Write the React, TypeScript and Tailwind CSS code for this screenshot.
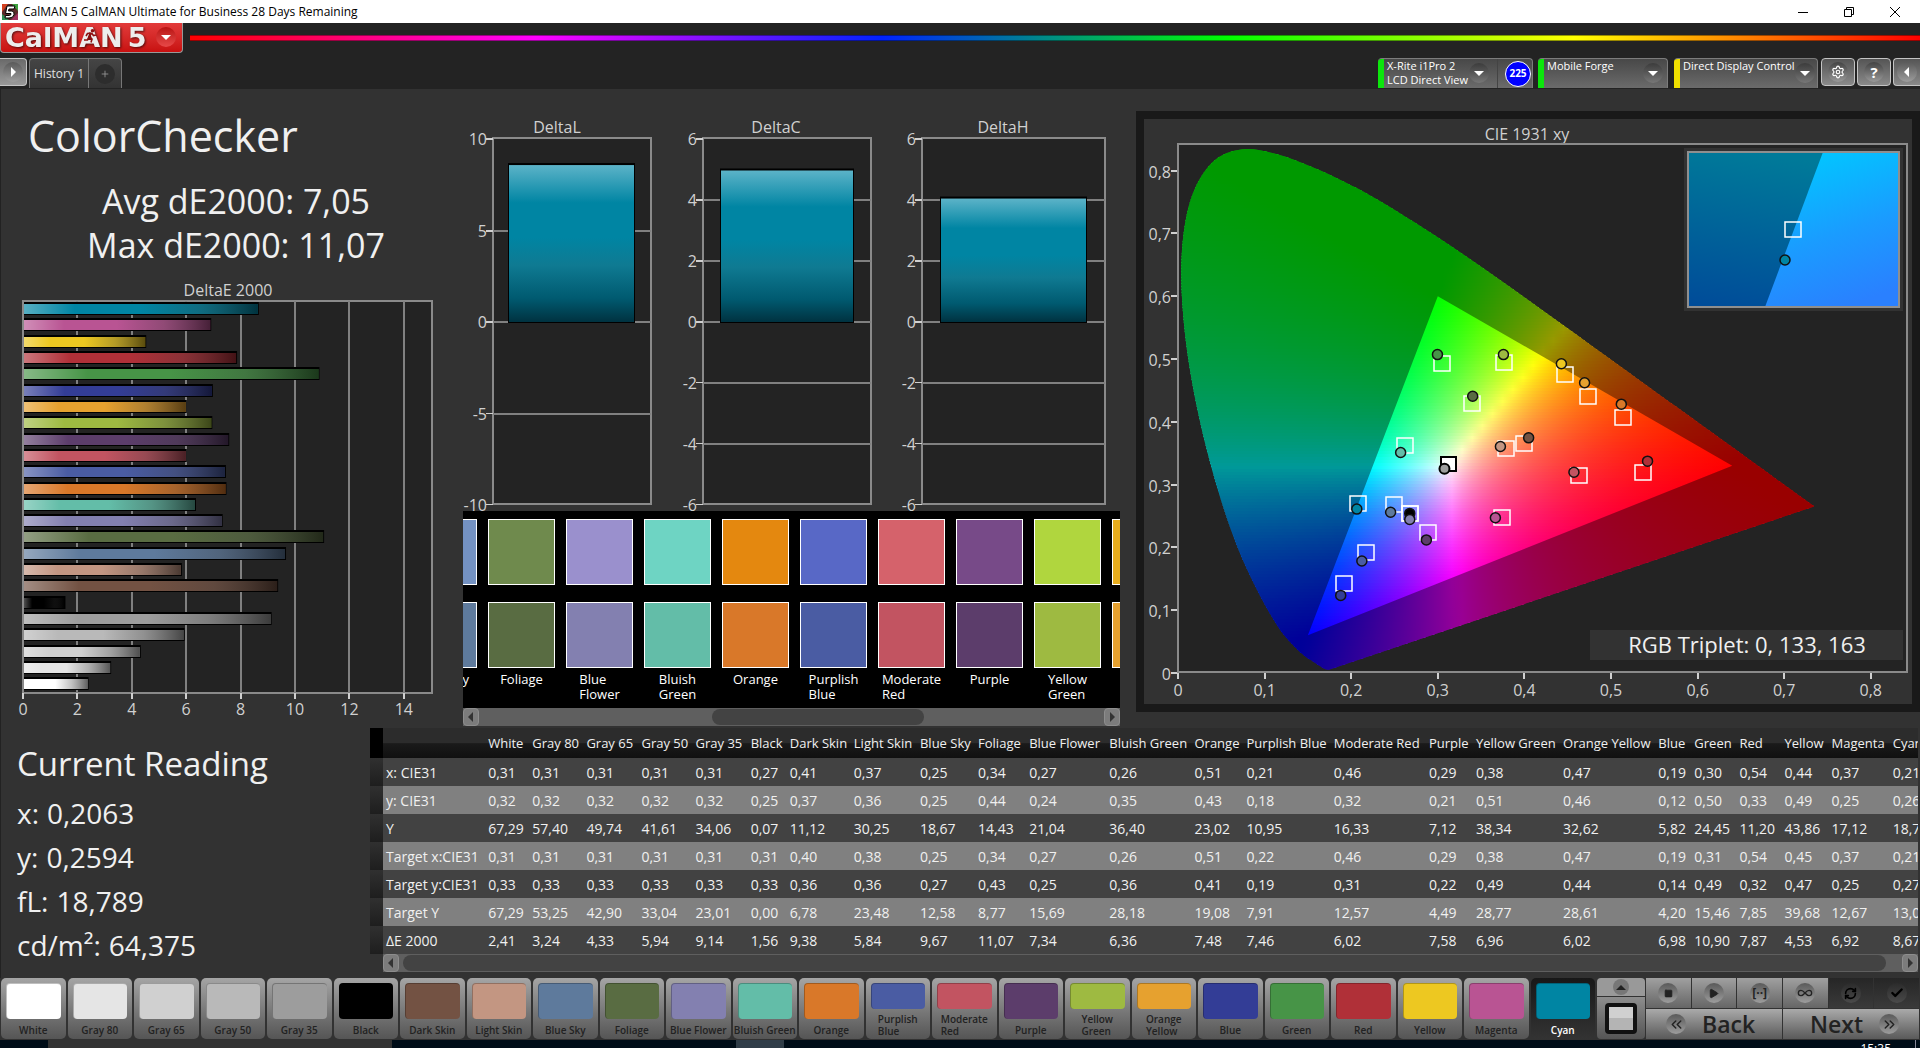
import type { ReactNode } from "react";
import {
  Settings,
  Square,
  Play,
  RefreshCw,
  Check,
  Infinity as InfinityIcon,
  ChevronsLeft,
  ChevronsRight,
  Plus,
} from "lucide-react";

type Patch = {
  name: string;
  color: string;
  values: string[];
  de: number;
  width: string;
};

const patches: Patch[] = [
  { name: "White", color: "#ffffff", values: ["0,31", "0,32", "67,29", "0,31", "0,33", "67,29", "2,41"], de: 2.41, width: "w-[44px]" },
  { name: "Gray 80", color: "#e5e5e5", values: ["0,31", "0,32", "57,40", "0,31", "0,33", "53,25", "3,24"], de: 3.24, width: "w-[54px]" },
  { name: "Gray 65", color: "#d0d0d0", values: ["0,31", "0,32", "49,74", "0,31", "0,33", "42,90", "4,33"], de: 4.33, width: "w-[55px]" },
  { name: "Gray 50", color: "#b9b9b9", values: ["0,31", "0,32", "41,61", "0,31", "0,33", "33,04", "5,94"], de: 5.94, width: "w-[54px]" },
  { name: "Gray 35", color: "#9d9d9d", values: ["0,31", "0,32", "34,06", "0,31", "0,33", "23,01", "9,14"], de: 9.14, width: "w-[55px]" },
  { name: "Black", color: "#000000", values: ["0,27", "0,25", "0,07", "0,31", "0,33", "0,00", "1,56"], de: 1.56, width: "w-[39px]" },
  { name: "Dark Skin", color: "#735243", values: ["0,41", "0,37", "11,12", "0,40", "0,36", "6,78", "9,38"], de: 9.38, width: "w-[64px]" },
  { name: "Light Skin", color: "#c39682", values: ["0,37", "0,36", "30,25", "0,38", "0,36", "23,48", "5,84"], de: 5.84, width: "w-[66px]" },
  { name: "Blue Sky", color: "#5e7a9c", values: ["0,25", "0,25", "18,67", "0,25", "0,27", "12,58", "9,67"], de: 9.67, width: "w-[58px]" },
  { name: "Foliage", color: "#596c42", values: ["0,34", "0,44", "14,43", "0,34", "0,43", "8,77", "11,07"], de: 11.07, width: "w-[51px]" },
  { name: "Blue Flower", color: "#8380b0", values: ["0,27", "0,24", "21,04", "0,27", "0,25", "15,69", "7,34"], de: 7.34, width: "w-[80px]" },
  { name: "Bluish Green", color: "#63bda8", values: ["0,26", "0,35", "36,40", "0,26", "0,36", "28,18", "6,36"], de: 6.36, width: "w-[85px]" },
  { name: "Orange", color: "#d97829", values: ["0,51", "0,43", "23,02", "0,51", "0,41", "19,08", "7,48"], de: 7.48, width: "w-[52px]" },
  { name: "Purplish Blue", color: "#4a5ca3", values: ["0,21", "0,18", "10,95", "0,22", "0,19", "7,91", "7,46"], de: 7.46, width: "w-[87px]" },
  { name: "Moderate Red", color: "#c25461", values: ["0,46", "0,32", "16,33", "0,46", "0,31", "12,57", "6,02"], de: 6.02, width: "w-[95px]" },
  { name: "Purple", color: "#5c3d6b", values: ["0,29", "0,21", "7,12", "0,29", "0,22", "4,49", "7,58"], de: 7.58, width: "w-[47px]" },
  { name: "Yellow Green", color: "#9eba41", values: ["0,38", "0,51", "38,34", "0,38", "0,49", "28,77", "6,96"], de: 6.96, width: "w-[87px]" },
  { name: "Orange Yellow", color: "#e6a12f", values: ["0,47", "0,46", "32,62", "0,47", "0,44", "28,61", "6,02"], de: 6.02, width: "w-[95px]" },
  { name: "Blue", color: "#333d96", values: ["0,19", "0,12", "5,82", "0,19", "0,14", "4,20", "6,98"], de: 6.98, width: "w-[36px]" },
  { name: "Green", color: "#479447", values: ["0,30", "0,50", "24,45", "0,31", "0,49", "15,46", "10,90"], de: 10.9, width: "w-[45px]" },
  { name: "Red", color: "#b03038", values: ["0,54", "0,33", "11,20", "0,54", "0,32", "7,85", "7,87"], de: 7.87, width: "w-[45px]" },
  { name: "Yellow", color: "#edc821", values: ["0,44", "0,49", "43,86", "0,45", "0,47", "39,68", "4,53"], de: 4.53, width: "w-[47px]" },
  { name: "Magenta", color: "#b95493", values: ["0,37", "0,25", "17,12", "0,37", "0,25", "12,67", "6,92"], de: 6.92, width: "w-[61px]" },
  { name: "Cyan", color: "#0085a3", values: ["0,21", "0,26", "18,75", "0,21", "0,27", "13,04", "8,67"], de: 8.67, width: "w-[40px]" },
];

const twoLine = ["Blue Flower", "Bluish Green", "Purplish Blue", "Moderate Red", "Yellow Green", "Orange Yellow"];

const rowNames = ["x: CIE31", "y: CIE31", "Y", "Target x:CIE31", "Target y:CIE31", "Target Y", "ΔE 2000"];

function DeltaEChart() {
  const unit = 27.2;
  const bars = [...patches].reverse();
  return (
    <svg viewBox="1 0 462 446" className="mt-[10px] block w-full" role="img" aria-label="DeltaE 2000 by patch">
      <defs>
        <linearGradient id="shadeX" x1="0" x2="1" y1="0" y2="0">
          <stop offset="0" stopColor="#fff" stopOpacity="0.35" />
          <stop offset="0.22" stopColor="#fff" stopOpacity="0" />
          <stop offset="0.5" stopColor="#333" stopOpacity="0" />
          <stop offset="0.75" stopColor="#333" stopOpacity="0.3" />
          <stop offset="1" stopColor="#000" stopOpacity="0.62" />
        </linearGradient>
      </defs>
      <text x="228" y="19" textAnchor="middle" className="fill-[#d0d0d0] text-[16px]">DeltaE 2000</text>
      <rect x="23" y="24" width="409" height="392" fill="#232323" stroke="#8a8a8a" strokeWidth="2" />
      {[0, 2, 4, 6, 8, 10, 12, 14].map((v) => (
        <g key={v}>
          {v > 0 && <rect x={Math.round(22 + v * unit)} y="24" width="2" height="392" fill="#808080" />}
          <rect x={Math.round(22 + v * unit)} y="416" width="2" height="6" fill="#d0d0d0" />
          <text x={23 + v * unit} y="438" textAnchor="middle" className="fill-[#d0d0d0] text-[16px]">{v}</text>
        </g>
      ))}
      {bars.map((p, i) => (
        <g key={p.name}>
          <rect x="23" y={Math.round(25 + i * 16.32)} width={p.de * unit} height="13" fill="#000" />
          <rect x="23" y={Math.round(25 + i * 16.32) + 2} width={p.de * unit - 1} height="10" fill={p.color} />
          <rect x="23" y={Math.round(25 + i * 16.32) + 2} width={p.de * unit - 1} height="10" fill="url(#shadeX)" />
        </g>
      ))}
      <rect x="22" y="24" width="2" height="392" fill="#8a8a8a" />
    </svg>
  );
}

type DeltaSpec = {
  title: string;
  titleX: number;
  left: number;
  right: number;
  barLeft: number;
  barRight: number;
  value: number;
  max: number;
  step: number;
};

const deltas: DeltaSpec[] = [
  { title: "DeltaL", titleX: 94, left: 30, right: 189, barLeft: 45, barRight: 172, value: 8.63, max: 10, step: 5 },
  { title: "DeltaC", titleX: 313, left: 240, right: 409, barLeft: 257, barRight: 391, value: 5.0, max: 6, step: 2 },
  { title: "DeltaH", titleX: 540, left: 459, right: 643, barLeft: 477, barRight: 624, value: 4.08, max: 6, step: 2 },
];

function DeltaCharts() {
  return (
    <svg viewBox="0 0 657 422" className="block w-full overflow-visible" role="img" aria-label="DeltaL, DeltaC and DeltaH">
      <defs>
        <linearGradient id="cyanBar" x1="0" x2="0" y1="0" y2="1">
          <stop offset="0" stopColor="#5cb3c8" />
          <stop offset="0.24" stopColor="#0085a3" />
          <stop offset="0.46" stopColor="#0085a3" />
          <stop offset="0.64" stopColor="#0f7a92" />
          <stop offset="0.85" stopColor="#005a70" />
          <stop offset="1" stopColor="#003240" />
        </linearGradient>
      </defs>
      {deltas.map((d) => {
        const mid = 233;
        const half = 183;
        const ticks: number[] = [];
        for (let v = d.max; v >= -d.max; v -= d.step) ticks.push(v);
        const top = mid - (d.value / d.max) * half;
        return (
          <g key={d.title}>
            <text x={d.titleX} y="44" textAnchor="middle" className="fill-[#d0d0d0] text-[16px]">{d.title}</text>
            <rect x={d.left} y="49" width={d.right - d.left - 1} height="366" fill="#232323" stroke="#8a8a8a" strokeWidth="2" />
            {ticks.map((v) => {
              const y = Math.round(mid - (v / d.max) * half);
              return (
                <g key={v}>
                  {Math.abs(v) < d.max && <rect x={d.left} y={y - 1} width={d.right - d.left - 1} height="2" fill="#808080" />}
                  <rect x={d.left - 7} y={y - 1} width="7" height={v >= 0 ? 2 : 1} fill="#d0d0d0" />
                  <text x={d.left - 6} y={y + 6} textAnchor="end" className="fill-[#d0d0d0] text-[16px]">{v}</text>
                </g>
              );
            })}
            <rect x={d.barLeft} y={top - 1} width={d.barRight - d.barLeft} height={mid - top + 2} fill="#000" />
            <rect x={d.barLeft + 1} y={top + 1} width={d.barRight - d.barLeft - 2} height={mid - top - 1} fill="url(#cyanBar)" />
          </g>
        );
      })}
    </svg>
  );
}

const locus: [number, number][] = [
  [0.1741, 0.005], [0.1689, 0.0069], [0.1644, 0.0109], [0.1566, 0.0177], [0.144, 0.0297], [0.1241, 0.0578],
  [0.1096, 0.0868], [0.0913, 0.1327], [0.0687, 0.2007], [0.0454, 0.295], [0.0235, 0.4127], [0.0082, 0.5384],
  [0.0039, 0.6548], [0.0139, 0.7502], [0.0389, 0.812], [0.0743, 0.8338], [0.1142, 0.8262], [0.1547, 0.8059],
  [0.1929, 0.7816], [0.2296, 0.7543], [0.3016, 0.6923], [0.3731, 0.6245], [0.4441, 0.5547], [0.5125, 0.4866],
  [0.5752, 0.4242], [0.627, 0.3725], [0.6658, 0.334], [0.6915, 0.3083], [0.719, 0.2809], [0.7347, 0.2653],
];

const px = (x: number) => 42 + x * 866;
const py = (y: number) => 562 - y * 628;

function locusPath() {
  const pts = locus.map(([x, y]) => [px(x), py(y)]);
  let d = `M${pts[0][0]},${pts[0][1]}`;
  for (let i = 0; i < pts.length - 1; i++) {
    const a = pts[Math.max(0, i - 1)];
    const b = pts[i];
    const c = pts[i + 1];
    const e = pts[Math.min(pts.length - 1, i + 2)];
    d += `C${b[0] + (c[0] - a[0]) / 6},${b[1] + (c[1] - a[1]) / 6} ${c[0] - (e[0] - b[0]) / 6},${c[1] - (e[1] - b[1]) / 6} ${c[0]},${c[1]}`;
  }
  return d + "Z";
}

const triangle = `M${px(0.64)},${py(0.33)}L${px(0.3)},${py(0.6)}L${px(0.15)},${py(0.06)}Z`;

function chromaColor(x: number, y: number) {
  const z = 1 - x - y;
  const lin = [
    3.2406 * x - 1.5372 * y - 0.4986 * z,
    -0.9689 * x + 1.8758 * y + 0.0415 * z,
    0.0557 * x - 0.204 * y + 1.057 * z,
  ].map((c) => Math.max(0, c));
  const peak = Math.max(...lin);
  const [r, g, b] = lin.map((c) => Math.round((255 * c) / peak));
  return `rgb(${r},${g},${b})`;
}

const STRIP = 3;
const strips = Array.from({ length: 178 }, (_, i) => {
  const top = 34 + i * STRIP;
  const y = (562 - (top + STRIP / 2)) / 628;
  return { top, stops: Array.from({ length: 65 }, (_, k) => chromaColor((k / 64) * 0.75, y)) };
});

type Marker = { tx: number; ty: number; mx: number; my: number; color: string };
const markers: Marker[] = [
  { tx: 0.305, ty: 0.493, mx: 0.2996, my: 0.507, color: "#479447" },
  { tx: 0.376, ty: 0.495, mx: 0.3758, my: 0.507, color: "#9eba41" },
  { tx: 0.447, ty: 0.476, mx: 0.4427, my: 0.4924, color: "#edc821" },
  { tx: 0.4735, ty: 0.4407, mx: 0.4695, my: 0.4622, color: "#e6a12f" },
  { tx: 0.5137, ty: 0.4073, mx: 0.5119, my: 0.4281, color: "#d97829" },
  { tx: 0.34, ty: 0.4294, mx: 0.3403, my: 0.4407, color: "#596c42" },
  { tx: 0.2624, ty: 0.3625, mx: 0.2571, my: 0.3512, color: "#63bda8" },
  { tx: 0.3793, ty: 0.3575, mx: 0.3723, my: 0.3607, color: "#c39682" },
  { tx: 0.3997, ty: 0.3657, mx: 0.4049, my: 0.3745, color: "#735243" },
  { tx: 0.4625, ty: 0.3153, mx: 0.4572, my: 0.3197, color: "#c25461" },
  { tx: 0.537, ty: 0.3197, mx: 0.5422, my: 0.3373, color: "#b03038" },
  { tx: 0.2083, ty: 0.2711, mx: 0.2065, my: 0.261, color: "#0085a3" },
  { tx: 0.2496, ty: 0.2686, mx: 0.2455, my: 0.256, color: "#5e7a9c" },
  { tx: 0.2676, ty: 0.2541, mx: 0.2676, my: 0.2541, color: "#000000" },
  { tx: 0.2676, ty: 0.2541, mx: 0.2676, my: 0.2446, color: "#8380b0" },
  { tx: 0.3741, ty: 0.2491, mx: 0.3665, my: 0.2472, color: "#b95493" },
  { tx: 0.2891, ty: 0.2238, mx: 0.2868, my: 0.2119, color: "#5c3d6b" },
  { tx: 0.217, ty: 0.1929, mx: 0.2123, my: 0.1784, color: "#4a5ca3" },
  { tx: 0.1914, ty: 0.1431, mx: 0.1879, my: 0.1236, color: "#333d96" },
];

const decimal = (v: number) => (v === 0 ? "0" : `0,${v}`);

function CieChart() {
  const shape = locusPath();
  return (
    <svg viewBox="0 0 768 585" className="block w-full border-8 border-[#191919] bg-[#323232]" role="img" aria-label="CIE 1931 xy chromaticity diagram">
      <defs>
        <clipPath id="locus"><path d={shape} /></clipPath>
        {strips.map((s) => (
          <linearGradient key={s.top} id={`strip${s.top}`} gradientUnits="userSpaceOnUse" x1={px(0)} x2={px(0.75)} y1="0" y2="0">
            {s.stops.map((c, k) => <stop key={k} offset={k / 64} stopColor={c} />)}
          </linearGradient>
        ))}
        <linearGradient id="insetDark" x1="0.3" x2="0.1" y1="0" y2="1">
          <stop offset="0" stopColor="#007a99" />
          <stop offset="1" stopColor="#004c99" />
        </linearGradient>
        <linearGradient id="insetLight" x1="0.3" x2="0.6" y1="0" y2="1">
          <stop offset="0" stopColor="#00c8ff" />
          <stop offset="0.55" stopColor="#1a9cff" />
          <stop offset="1" stopColor="#2a80ff" />
        </linearGradient>
      </defs>
      <g transform="translate(-8 -8)">
        <text x="391" y="29" textAnchor="middle" className="fill-[#d0d0d0] text-[16px]">CIE 1931 xy</text>
        <rect x="42" y="33" width="729" height="528" fill="#232323" stroke="#8a8a8a" strokeWidth="2" />
        <g clipPath="url(#locus)">
          {strips.map((s) => (
            <rect key={s.top} x="42" y={s.top} width="660" height={STRIP + 1} fill={`url(#strip${s.top})`} />
          ))}
          <path d={`M42,30H771V565H42Z${triangle}`} fillRule="evenodd" fill="#000" fillOpacity="0.4" />
        </g>
        {[0, 1, 2, 3, 4, 5, 6, 7, 8].map((v) => (
          <g key={v}>
            <rect x={Math.round(px(v / 10)) - 1} y="562" width="2" height="6" fill="#d0d0d0" />
            <text x={px(v / 10)} y="585" textAnchor="middle" className="fill-[#d0d0d0] text-[16px]">{decimal(v)}</text>
            <rect x="35" y={Math.round(py(v / 10)) - 1} width="6" height="2" fill="#d0d0d0" />
            <text x="35" y={py(v / 10) + 7} textAnchor="end" className="fill-[#d0d0d0] text-[16px]">{decimal(v)}</text>
          </g>
        ))}
        {markers.map((m, i) => (
          <rect key={i} x={Math.round(px(m.tx)) - 8} y={Math.round(py(m.ty)) - 7} width="16" height="15" fill="none" stroke="#fff" strokeWidth="1.5" />
        ))}
        <rect x="305" y="346" width="15" height="14" fill="#fff" stroke="#000" strokeWidth="2" />
        <circle cx={px(0.3077)} cy={py(0.3253)} r="5" fill="#9d9d9d" stroke="#000" strokeWidth="2" />
        {markers.map((m, i) => (
          <circle key={i} cx={px(m.mx)} cy={py(m.my)} r="5" fill={m.color} stroke="#111" strokeWidth="1.5" />
        ))}
        <rect x="548" y="37" width="219" height="163" fill="#323232" />
        <rect x="552" y="41" width="211" height="155" fill="url(#insetDark)" />
        <path d="M687,41H763V196H629Z" fill="url(#insetLight)" />
        <rect x="552" y="41" width="211" height="155" fill="none" stroke="#8f8f8f" strokeWidth="2" />
        <rect x="649" y="111" width="16" height="15" fill="none" stroke="#fff" strokeWidth="1.5" />
        <circle cx="649" cy="149" r="5" fill="#0085a3" stroke="#111" strokeWidth="1.5" />
        <rect x="454" y="519" width="313" height="30" fill="#323232" />
        <text x="611" y="542" textAnchor="middle" className="fill-[#f0f0f0] text-[22px]">RGB Triplet: 0, 133, 163</text>
      </g>
    </svg>
  );
}

const swatches = [
  { name: "Blue Sky", target: "#7492c2", actual: "#5e7a9c" },
  { name: "Foliage", target: "#6f8a4d", actual: "#596c42" },
  { name: "Blue Flower", target: "#9a90cd", actual: "#8380b0" },
  { name: "Bluish Green", target: "#6ed4c3", actual: "#63bda8" },
  { name: "Orange", target: "#e4880f", actual: "#d97829" },
  { name: "Purplish Blue", target: "#5868c6", actual: "#4a5ca3" },
  { name: "Moderate Red", target: "#d5626b", actual: "#c25461" },
  { name: "Purple", target: "#774a88", actual: "#5c3d6b" },
  { name: "Yellow Green", target: "#b0d63e", actual: "#9eba41" },
  { name: "", target: "#e8ad1d", actual: "#e6a12f" },
];

function Arrow({ dir }: { dir: "left" | "right" | "down" | "up" }) {
  const d = { left: "M8 1V11L3 6Z", right: "M4 1V11L9 6Z", down: "M1 4H11L6 9Z", up: "M1 9H11L6 4Z" }[dir];
  return (
    <svg viewBox="0 0 12 12" className="size-3 fill-current" aria-hidden="true">
      <path d={d} />
    </svg>
  );
}

function ScrollBar({ before, thumb, after }: { before: string; thumb: string; after: string }) {
  return (
    <div className="flex h-[18px] bg-[#5f5f5f] text-[#333]">
      <button aria-label="Scroll left" className="flex w-4 items-center justify-center rounded border border-[#8d8d8d] bg-[#7c7c7c]"><Arrow dir="left" /></button>
      <div className={before} />
      <div className={`my-px rounded-lg bg-[#434343] ${thumb}`} />
      <div className={after} />
      <button aria-label="Scroll right" className="flex w-4 items-center justify-center rounded border border-[#8d8d8d] bg-[#7c7c7c]"><Arrow dir="right" /></button>
    </div>
  );
}

function SwatchStrip() {
  return (
    <div>
      <div className="h-[197px] overflow-hidden bg-black pt-2">
        <div className="-ml-[53px] flex gap-[11px]">
          {swatches.map((s) => (
            <div key={s.target} className="flex w-[67px] shrink-0 flex-col items-center">
              <div className="h-[66px] w-full border border-white" style={{ backgroundColor: s.target }} />
              <div className="mt-[17px] h-[66px] w-full border border-white" style={{ backgroundColor: s.actual }} />
              <span className={`mt-1 text-[13px] leading-[15px] text-white ${twoLine.includes(s.name) ? "w-min" : "whitespace-nowrap"}`}>{s.name}</span>
            </div>
          ))}
        </div>
      </div>
      <ScrollBar before="grow-[233]" thumb="grow-[212]" after="grow-[180]" />
    </div>
  );
}

function Round({ children, dark = false }: { children: ReactNode; dark?: boolean }) {
  return (
    <span className={`flex size-5 shrink-0 items-center justify-center rounded-full bg-gradient-to-b ${dark ? "from-[#2b2b2b] to-[#4a4a4a] text-black" : "from-[#5a5a5a] to-[#9d9d9d]"}`}>
      {children}
    </span>
  );
}

function Device({ bar, lines, width, children }: { bar: string; lines: string[]; width: string; children?: ReactNode }) {
  return (
    <div className={`flex h-[30px] overflow-hidden rounded-t border-t border-r border-[#7c7c7c] bg-gradient-to-b from-[#484848] to-[#6b6b6b] ${width}`}>
      <div className={`w-[6px] shrink-0 ${bar}`} />
      <button className={`flex grow items-start justify-between pl-[3px] text-left text-[11px] leading-[14px] whitespace-nowrap text-white ${children ? "pr-2" : "pr-1"}`}>
        <span>{lines.map((l) => <span key={l} className="block">{l}</span>)}</span>
        <span className="mt-1 flex size-5 shrink-0 items-center justify-center rounded-full bg-gradient-to-b from-[#3c3c3c] to-[#777]"><Arrow dir="down" /></span>
      </button>
      {children}
    </div>
  );
}

function ToolButton({ label, children }: { label: string; children: ReactNode }) {
  return (
    <button aria-label={label} className="flex h-[28px] w-[34px] items-center justify-center rounded border border-[#c4c4c4] bg-gradient-to-b from-[#555] to-[#8a8a8a] text-white">
      <span className="flex size-5 items-center justify-center rounded-full bg-gradient-to-b from-[#444] to-[#999]">{children}</span>
    </button>
  );
}

function Runner() {
  return (
    <svg viewBox="0 0 14 14" className="absolute top-[7px] left-1 size-[14px]" aria-hidden="true">
      <circle cx="9.500" cy="1.800" r="1.800" fill="#8e1010" />
      <path d="M8.500 4L6 8L9 10L8 13.500M6 8L4.500 11H1M8.500 4L4.500 4.500L3 7M8.500 4L10.500 6.500L13 6" fill="none" stroke="#8e1010" strokeWidth="1.600" />
    </svg>
  );
}

function Header() {
  return (
    <header className="bg-[#232323]">
      <div className="flex h-[23px] items-center bg-white pl-0.5 text-[12px] text-black">
        <svg viewBox="0 0 16 16" className="size-4" aria-hidden="true">
          <rect width="16" height="16" fill="#5a2a2a" />
          <path d="M0 0H6L0 8Z" fill="#d24020" /><path d="M10 0H16V7Z" fill="#3da03d" /><path d="M0 10V16H7Z" fill="#2f8f55" /><path d="M16 9V16H9Z" fill="#a03060" />
          <path d="M5 2H13L12 5H7L6.500 7H10Q12.500 7.500 12 10.500Q11.500 14 7 14H3L3.500 11.500H7.500Q9.500 11 9 9.500H3.500Z" fill="#fff" stroke="#000" />
        </svg>
        <h1 className="grow pl-[5px]">CalMAN 5 CalMAN Ultimate for Business 28 Days Remaining</h1>
        <div className="flex gap-9 pr-5">
          <button aria-label="Minimize"><svg viewBox="0 0 10 10" className="size-[10px]" aria-hidden="true"><path d="M0 5.500H10" stroke="#000" /></svg></button>
          <button aria-label="Restore"><svg viewBox="0 0 10 10" className="size-[10px]" aria-hidden="true"><path d="M.5 2.500H7.500V9.500H.5ZM2.500 2.500V.5H9.500V7.500H7.500" fill="none" stroke="#000" /></svg></button>
          <button aria-label="Close"><svg viewBox="0 0 10 10" className="size-[10px]" aria-hidden="true"><path d="M0 0L10 10M10 0L0 10" stroke="#000" /></svg></button>
        </div>
      </div>
      <div className="flex items-start">
        <button className="flex h-[30px] w-[183px] items-center justify-between rounded-b border border-t-0 border-[#999] bg-gradient-to-b from-[#e23a3a] to-[#c80f0f] pr-[6px] pb-px pl-1 font-['DejaVu_Sans'] text-[27px] leading-none font-bold text-[#ededed]">
          <span className="flex gap-[5px] drop-shadow-[1px_1px_1px_rgba(0,0,0,0.6)]"><span>CalM<span className="relative">A<Runner /></span>N</span><span>5</span></span>
          <span className="flex size-5 items-center justify-center rounded-full bg-gradient-to-b from-[#b81010] to-[#e84848] text-white"><Arrow dir="down" /></span>
        </button>
        <div className="mt-3 ml-[7px] h-[6px] grow border-y border-black/40 bg-[linear-gradient(90deg,#f00,#f0f,#02f,#0f0,#ff0,#f00)]" />
      </div>
      <div className="flex items-end justify-between pt-[5px]">
        <div className="flex h-[31px] items-start">
          <button aria-label="Show workflow" className="flex h-[28px] w-[27px] items-center justify-center rounded-r border border-l-0 border-[#c4c4c4] bg-gradient-to-b from-[#6a6a6a] to-[#999] text-white"><Round><Arrow dir="right" /></Round></button>
          <div className="ml-[2px] flex h-[30px] rounded-t border border-b-0 border-[#777] bg-gradient-to-b from-[#454545] to-[#333]">
            <button className="w-[58px] text-[12px] text-[#e0e0e0]">History 1</button>
            <button aria-label="Add tab" className="flex w-[33px] items-center justify-center border-l border-[#777] text-[#999]"><span className="flex size-5 items-center justify-center rounded-full bg-[#2d2d2d]"><Plus size={10} strokeWidth={2} /></span></button>
          </div>
        </div>
        <div className="flex h-[31px] items-start">
          <Device bar="bg-[#0ce60c]" lines={["X-Rite i1Pro 2", "LCD Direct View"]} width="w-[155px]">
            <span className="flex w-[35px] shrink-0 items-center justify-end border-l border-[#444] pr-px">
              <span className="flex size-[26px] items-center justify-center rounded-full border border-white bg-[#0000ff] text-[10px] font-bold text-white">225</span>
            </span>
          </Device>
          <div className="w-[5px]" />
          <Device bar="bg-[#0ce60c]" lines={["Mobile Forge"]} width="w-[130px]" />
          <div className="w-[6px]" />
          <Device bar="bg-[#f0e000]" lines={["Direct Display Control"]} width="w-[144px]" />
          <div className="ml-[3px] flex gap-[2px]">
            <ToolButton label="Settings"><Settings size={14} /></ToolButton>
            <ToolButton label="Help"><span className="text-[15px] leading-none font-bold">?</span></ToolButton>
          </div>
          <button aria-label="Collapse" className="ml-[2px] flex h-[28px] w-[27px] items-center justify-center rounded-l border border-r-0 border-[#c4c4c4] bg-gradient-to-b from-[#555] to-[#8a8a8a] text-white"><Round><Arrow dir="left" /></Round></button>
        </div>
      </div>
    </header>
  );
}

function ReadingTable() {
  return (
    <div className="mr-[2px] min-w-0 grow overflow-hidden">
      <div className="overflow-hidden">
        <table className="w-[1560px] table-fixed border-collapse text-left text-[14px] whitespace-nowrap text-[#f0f0f0]">
          <thead>
            <tr className="h-[30px] bg-[linear-gradient(#2c2c2c_0_50%,#1a1a1a_52%,#101010)] text-[13px]">
              <td className="w-[13px] bg-black" />
              <th className="w-[102px]" aria-label="Reading" />
              {patches.map((p) => <th key={p.name} scope="col" className={`pt-[2px] pl-[3px] font-normal ${p.width}`}>{p.name}</th>)}
            </tr>
          </thead>
          <tbody>
            {rowNames.map((name, r) => (
              <tr key={name} className={`h-[28px] ${r % 2 ? "bg-[#808080]" : "bg-[#424242]"}`}>
                <td className="bg-gradient-to-b from-[#303030] to-[#1e1e1e]" />
                <th scope="row" className="pl-[3px] font-normal">{name}</th>
                {patches.map((p) => <td key={p.name} className="pl-[3px]">{p.values[r]}</td>)}
              </tr>
            ))}
          </tbody>
        </table>
      </div>
      <div className="ml-[13px]"><ScrollBar before="w-1" thumb="grow" after="w-4" /></div>
    </div>
  );
}

function PatchButton({ patch }: { patch: Patch }) {
  const active = patch.name === "Cyan";
  const split = twoLine.indexOf(patch.name) > 1;
  return (
    <button
      aria-pressed={active}
      className={`flex h-[61px] min-w-0 flex-1 flex-col items-center rounded-[5px] px-[5px] pt-[5px] bg-gradient-to-b ${active ? "from-[#181818] to-[#333] text-white" : "from-[#a5a5a5] to-[#555] text-[#222]"}`}
    >
      <span className="w-full grow rounded border-t border-l border-black/25" style={{ backgroundColor: patch.color }} />
      <span className={`mt-[4px] mb-[2px] text-left text-[10px] font-semibold ${split ? "w-min leading-[12px]" : "leading-[14px] whitespace-nowrap"}`}>{patch.name}</span>
    </button>
  );
}

function Footer() {
  const transport: { label: string; icon: ReactNode; off?: boolean }[] = [
    { label: "Stop", icon: <Square size={9} fill="#222" /> },
    { label: "Read", icon: <Play size={11} fill="#222" /> },
    { label: "Read series", icon: <span className="text-[12px] leading-none font-bold">[··]</span> },
    { label: "Read continuously", icon: <InfinityIcon size={16} /> },
    { label: "Refresh", icon: <RefreshCw size={13} strokeWidth={3} />, off: true },
    { label: "Accept", icon: <Check size={14} strokeWidth={4} />, off: true },
  ];
  return (
    <footer>
      <div className="flex pl-px">
        <div className="flex min-w-0 grow gap-[2px]">
          {patches.map((p) => <PatchButton key={p.name} patch={p} />)}
        </div>
        <div className="ml-[2px] flex h-[61px] w-[48px] flex-col gap-px text-[#222]">
          <button aria-label="Expand patches" className="flex h-[18px] items-center justify-center rounded-t bg-[#999]"><span className="flex size-4 items-center justify-center rounded-full bg-[#777]"><Arrow dir="up" /></span></button>
          <button aria-label="Patch window" className="flex grow items-center justify-center rounded-b bg-gradient-to-b from-[#8d8d8d] to-[#555]"><span className="h-[31px] w-[32px] rounded border-4 border-[#111] bg-[linear-gradient(#d0d0d0_50%,#b4b4b4_50%)]" /></button>
        </div>
        <div className="mr-px ml-px w-[273px] shrink-0 text-[#222]">
          <div className="grid h-[30px] grid-cols-6 gap-px">
            {transport.map((t) => (
              <button key={t.label} aria-label={t.label} className={`flex items-center justify-center bg-gradient-to-b ${t.off ? "from-[#262626] to-[#3a3a3a]" : "from-[#a0a0a0] to-[#666]"}`}>
                <Round dark={t.off}>{t.icon}</Round>
              </button>
            ))}
          </div>
          <div className="mt-px grid h-[30px] grid-cols-2 gap-px text-[23px] leading-none font-semibold">
            <button className="flex items-center gap-4 bg-gradient-to-b from-[#aaa] to-[#5a5a5a] pl-5"><Round><ChevronsLeft size={17} /></Round>Back</button>
            <button className="flex items-center justify-end gap-4 bg-gradient-to-b from-[#aaa] to-[#5a5a5a] pr-5">Next<Round><ChevronsRight size={17} /></Round></button>
          </div>
        </div>
      </div>
      <div className="mt-px flex h-2 overflow-hidden bg-[#000d18] text-[12px] leading-[18px] text-white">
        <div className="ml-[48px] w-[344px] bg-[#333]" />
        <div className="ml-[344px] w-12 bg-[#303d48]" />
        <div className="grow" />
        <span className="mr-6">15:35</span>
        <div className="mr-1 w-px bg-[#889]" />
      </div>
    </footer>
  );
}

export default function App() {
  return (
    <div className="flex min-h-screen flex-col overflow-hidden bg-[#323232] font-['Open_Sans',sans-serif] text-[#f0f0f0]">
      <Header />
      <main className="grow border-l border-[#222]">
        <div className="grid grid-cols-[minmax(0,462fr)_minmax(0,657fr)_minmax(0,800fr)] pb-[2px]">
          <section>
            <h2 className="pt-[15px] pl-[27px] text-[43px] leading-[64px]">ColorChecker</h2>
            <div className="pt-[11px] pl-2 text-center text-[34px] leading-[44px]">
              <p>Avg dE2000: 7,05</p>
              <p>Max dE2000: 11,07</p>
            </div>
            <DeltaEChart />
          </section>
          <section>
            <DeltaCharts />
            <SwatchStrip />
          </section>
          <section className="pt-[22px] pl-4">
            <CieChart />
          </section>
        </div>
        <div className="flex pb-[5px]">
          <section className="w-[369px] shrink-0 pt-[14px] pl-4">
            <h2 className="text-[33px] leading-[44px]">Current Reading</h2>
            <dl className="pt-[5px] text-[28px] leading-[44px]">
              <div className="flex gap-2"><dt>x:</dt><dd>0,2063</dd></div>
              <div className="flex gap-2"><dt>y:</dt><dd>0,2594</dd></div>
              <div className="flex gap-2"><dt>fL:</dt><dd>18,789</dd></div>
              <div className="flex gap-2"><dt>cd/m²:</dt><dd>64,375</dd></div>
            </dl>
          </section>
          <ReadingTable />
        </div>
      </main>
      <Footer />
    </div>
  );
}
